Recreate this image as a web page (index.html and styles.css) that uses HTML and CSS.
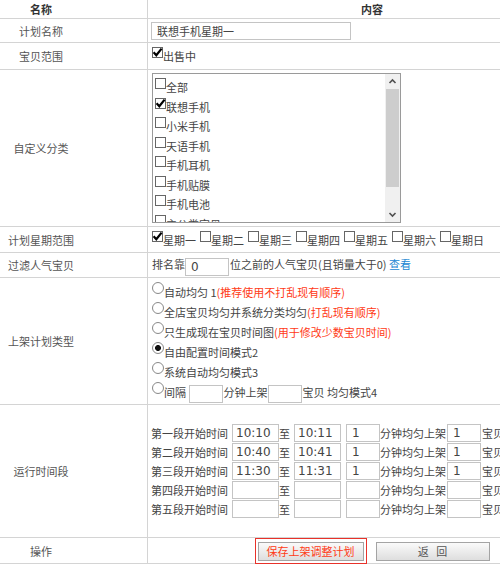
FILE: index.html
```html
<!DOCTYPE html>
<html lang="zh-CN">
<head>
<meta charset="utf-8">
<title>上架计划</title>
<link rel="stylesheet" href="styles.css">
</head>
<body>
<div class="form">
  <div class="row r-head">
    <div class="lab th">名称</div>
    <div class="con th">内容</div>
  </div>
  <div class="row r-name">
    <div class="lab">计划名称</div>
    <div class="con"><input class="txt name" type="text" value="联想手机星期一"></div>
  </div>
  <div class="row r-scope">
    <div class="lab">宝贝范围</div>
    <div class="con"><span class="line"><span class="cb on"><svg viewBox="0 0 11 11"><path d="M1.6 5.2 L4.3 8.2 L9.6 1.6"/></svg></span>出售中</span></div>
  </div>
  <div class="row r-cat">
    <div class="lab">自定义分类</div>
    <div class="con">
      <div class="lb">
        <div class="lb-items">
          <div class="it"><span class="cb"></span>全部</div>
          <div class="it"><span class="cb on"><svg viewBox="0 0 11 11"><path d="M1.6 5.2 L4.3 8.2 L9.6 1.6"/></svg></span>联想手机</div>
          <div class="it"><span class="cb"></span>小米手机</div>
          <div class="it"><span class="cb"></span>天语手机</div>
          <div class="it"><span class="cb"></span>手机耳机</div>
          <div class="it"><span class="cb"></span>手机贴膜</div>
          <div class="it"><span class="cb"></span>手机电池</div>
          <div class="it"><span class="cb"></span>主公类宝贝</div>
          <div class="it"><span class="cb"></span>数码配件</div>
        </div>
        <div class="lb-bar">
          <div class="arr"><svg viewBox="0 0 15 15"><path d="M4.5 9 L7.5 6 L10.5 9"/></svg></div>
          <div class="thumb"></div>
          <div class="track"></div>
          <div class="arr"><svg viewBox="0 0 15 15"><path d="M4.5 6 L7.5 9 L10.5 6"/></svg></div>
        </div>
      </div>
    </div>
  </div>
  <div class="row r-week">
    <div class="lab">计划星期范围</div>
    <div class="con"><span class="line">
      <span class="day"><span class="cb on"><svg viewBox="0 0 11 11"><path d="M1.6 5.2 L4.3 8.2 L9.6 1.6"/></svg></span>星期一</span><span class="day"><span class="cb"></span>星期二</span><span class="day"><span class="cb"></span>星期三</span><span class="day"><span class="cb"></span>星期四</span><span class="day"><span class="cb"></span>星期五</span><span class="day"><span class="cb"></span>星期六</span><span class="day"><span class="cb"></span>星期日</span>
    </span></div>
  </div>
  <div class="row r-filter">
    <div class="lab">过滤人气宝贝</div>
    <div class="con"><span class="line">排名靠<input class="txt num rank" type="text" value="0">位之前的人气宝贝(且销量大于0) <a class="link">查看</a></span></div>
  </div>
  <div class="row r-type">
    <div class="lab">上架计划类型</div>
    <div class="con">
      <div class="opts">
        <div class="opt"><span class="rb"></span>自动均匀 1<span class="red">(推荐使用不打乱现有顺序)</span></div>
        <div class="opt"><span class="rb"></span>全店宝贝均匀并系统分类均匀<span class="red">(打乱现有顺序)</span></div>
        <div class="opt"><span class="rb"></span>只生成现在宝贝时间图<span class="red">(用于修改少数宝贝时间)</span></div>
        <div class="opt"><span class="rb on"></span>自由配置时间模式2</div>
        <div class="opt"><span class="rb"></span>系统自动均匀模式3</div>
        <div class="opt"><span class="rb"></span>间隔 <input class="txt num gap" type="text" value="">分钟上架<input class="txt num gap2" type="text" value="">宝贝 均匀模式4</div>
      </div>
    </div>
  </div>
  <div class="row r-time">
    <div class="lab">运行时间段</div>
    <div class="con">
      <div class="times">
        <div class="tr"><span class="tl">第一段开始时间</span><input class="txt num tm" type="text" value="10:10"><span class="to">至</span><input class="txt num tm tm2" type="text" value="10:11"><input class="txt num tn" type="text" value="1"><span class="unit">分钟均匀上架</span><input class="txt num tn" type="text" value="1"><span class="tail">宝贝</span></div>
        <div class="tr"><span class="tl">第二段开始时间</span><input class="txt num tm" type="text" value="10:40"><span class="to">至</span><input class="txt num tm tm2" type="text" value="10:41"><input class="txt num tn" type="text" value="1"><span class="unit">分钟均匀上架</span><input class="txt num tn" type="text" value="1"><span class="tail">宝贝</span></div>
        <div class="tr"><span class="tl">第三段开始时间</span><input class="txt num tm" type="text" value="11:30"><span class="to">至</span><input class="txt num tm tm2" type="text" value="11:31"><input class="txt num tn" type="text" value="1"><span class="unit">分钟均匀上架</span><input class="txt num tn" type="text" value="1"><span class="tail">宝贝</span></div>
        <div class="tr"><span class="tl">第四段开始时间</span><input class="txt num tm" type="text" value=""><span class="to">至</span><input class="txt num tm tm2" type="text" value=""><input class="txt num tn" type="text" value=""><span class="unit">分钟均匀上架</span><input class="txt num tn" type="text" value=""><span class="tail">宝贝</span></div>
        <div class="tr"><span class="tl">第五段开始时间</span><input class="txt num tm" type="text" value=""><span class="to">至</span><input class="txt num tm tm2" type="text" value=""><input class="txt num tn" type="text" value=""><span class="unit">分钟均匀上架</span><input class="txt num tn" type="text" value=""><span class="tail">宝贝</span></div>
      </div>
    </div>
  </div>
  <div class="row r-op">
    <div class="lab">操作</div>
    <div class="con ops">
      <span class="hl"><button class="btn save" type="button">保存上架调整计划</button></span><button class="btn back" type="button">返 回</button>
    </div>
  </div>
</div>
</body>
</html>
```

FILE: styles.css
```css
html, body {
  margin: 0;
  padding: 0;
  background: #fff;
  overflow: hidden;
}
body {
  font-family: "Noto Sans CJK SC", "Noto Sans", sans-serif;
  font-size: 11px;
  color: #444;
}
.form {
  width: 596px;
}
.row {
  display: grid;
  grid-template-columns: 148px 448px;
  border-bottom: 1px solid #d4d4d4;
}
.lab {
  border-right: 1px solid #d4d4d4;
  display: flex;
  align-items: center;
  justify-content: center;
  padding-right: 65px;
  color: #555;
  white-space: nowrap;
}
.con {
  display: flex;
  align-items: center;
  padding-left: 4px;
  white-space: nowrap;
}
.th {
  font-weight: bold;
  color: #333;
}
.con.th {
  justify-content: center;
  padding-left: 0;
}
.r-head { height: 18px; }
.r-name { height: 23px; }
.r-scope { height: 26px; }
.r-cat { height: 156px; }
.r-week { height: 25px; }
.r-filter { height: 24px; }
.r-type { height: 126px; }
.r-time { height: 132px; }
.r-op { height: 25px; }

.line {
  line-height: 20px;
}

/* inputs */
.txt {
  box-sizing: border-box;
  height: 18px;
  border: 1px solid #c4c4c4;
  margin: 0;
  padding: 0 3px;
  font-family: "Noto Sans CJK SC", sans-serif;
  font-size: 11px;
  color: #444;
  background: #fff;
  outline: none;
}
.num {
  font-family: "DejaVu Sans", "Noto Sans CJK SC", sans-serif;
  font-size: 12px;
  vertical-align: middle;
}
.name {
  width: 200px;
  padding-left: 5px;
  margin-left: -1px;
}
.rank {
  width: 44px;
  margin: 0 1px 0 0;
  padding-left: 5px;
}
.gap {
  width: 34px;
  margin-left: 1px;
}
.gap2 {
  width: 34px;
  margin-left: 1px;
}

/* check / radio */
.cb, .rb {
  display: inline-block;
  box-sizing: border-box;
  width: 11px;
  height: 11px;
  border: 1px solid #666;
  background: #fff;
  vertical-align: 3px;
}
.cb svg {
  display: block;
  width: 11px;
  height: 11px;
  margin: -1px 0 0 -1px;
  overflow: visible;
}
.cb svg path {
  fill: none;
  stroke: #000;
  stroke-width: 2.2;
}
.rb {
  width: 12px;
  height: 12px;
  border-radius: 50%;
  border-color: #888;
}
.rb.on {
  background: radial-gradient(circle, #111 0 2.6px, #fff 3.3px);
}

/* list box */
.lb {
  box-sizing: border-box;
  width: 249px;
  height: 150px;
  border: 1px solid #9a9a9a;
  display: flex;
}
.lb-items {
  flex: 1;
  overflow: hidden;
  padding: 4px 0 0 2px;
}
.it {
  height: 19.5px;
  line-height: 19.5px;
}
.lb-bar {
  width: 15px;
  background: #f0f0f0;
  display: flex;
  flex-direction: column;
}
.arr {
  height: 15px;
}
.arr svg {
  display: block;
  width: 15px;
  height: 15px;
}
.arr svg path {
  fill: none;
  stroke: #505050;
  stroke-width: 1.6;
}
.thumb {
  height: 98px;
  background: #cdcdcd;
  margin: 0 1px;
}
.track {
  flex: 1;
}

/* week */
.day {
  margin-right: 4px;
}

/* filter */
.link {
  color: #1b87d3;
  cursor: pointer;
}

/* type options */
.opts {
  padding-top: 1px;
}
.opt {
  height: 20px;
  line-height: 20px;
}
.red {
  color: #ff3a16;
}

/* time rows */
.times {
  margin-left: -1px;
}
.tr {
  display: flex;
  align-items: center;
  height: 19px;
}
.tl {
  width: 77px;
  margin-right: 4px;
}
.tm {
  width: 47px;
}
.to {
  width: 11px;
  margin-right: 4px;
}
.tm2 {
  margin-right: 5px;
}
.tn {
  width: 34px;
  padding-left: 5px;
}
.unit {
  width: 66px;
  margin-right: 1px;
}
.tail {
  margin-left: 1px;
}

/* buttons */
.ops {
  justify-content: center;
  padding-left: 0;
}
.hl {
  display: inline-block;
  border: 1px solid #e8322a;
  padding: 3px 2px 2px 2px;
  line-height: 0;
}
.btn {
  box-sizing: border-box;
  height: 19px;
  margin: 0;
  border: 1px solid #a4a4a4;
  background: linear-gradient(#fafafa, #dedede);
  font-family: "Noto Sans CJK SC", sans-serif;
  font-size: 11px;
  line-height: 17px;
  padding: 0;
  cursor: pointer;
}
.save {
  width: 106px;
  color: #ff3a16;
}
.back {
  width: 114px;
  margin-left: 9px;
  color: #555;
  word-spacing: 5px;
}
```
